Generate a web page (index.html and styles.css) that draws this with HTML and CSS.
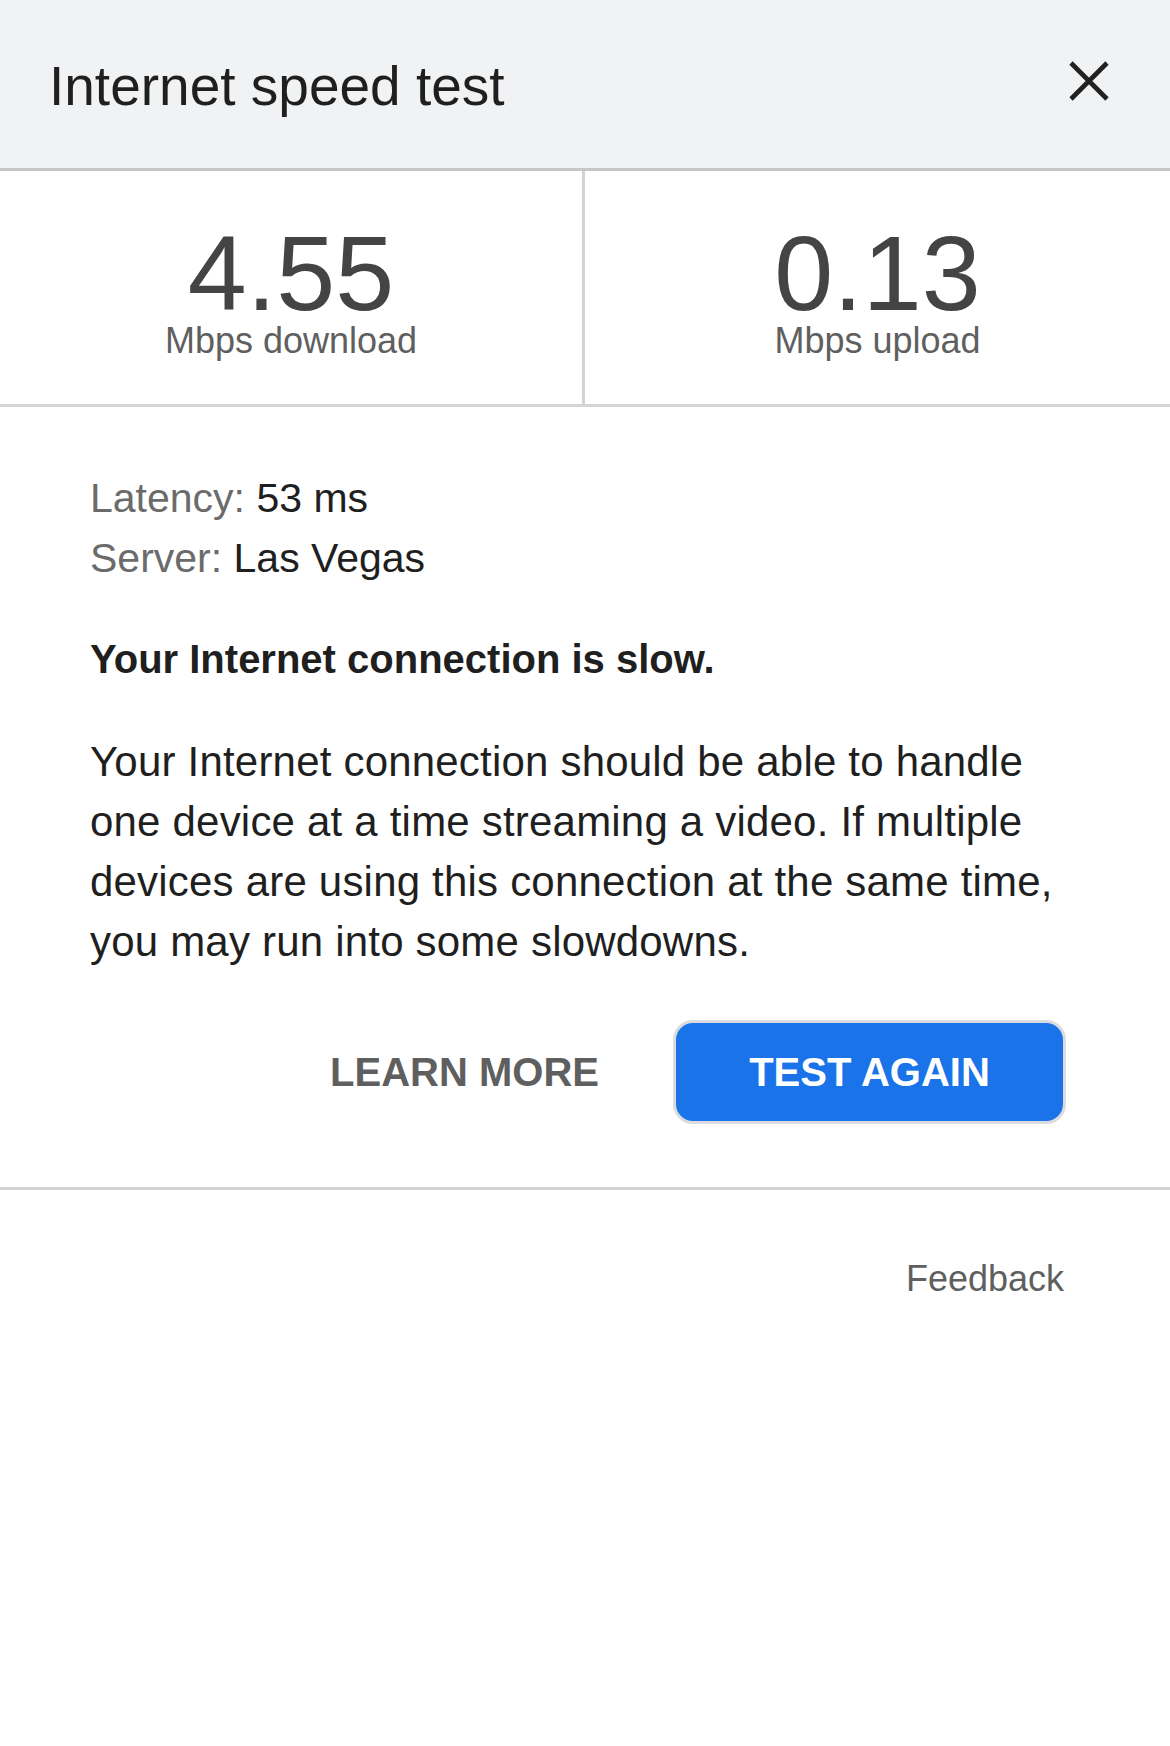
FILE: index.html
```html
<!DOCTYPE html>
<html lang="en">
<head>
<meta charset="utf-8">
<title>Internet speed test</title>
<link rel="stylesheet" href="styles.css">
</head>
<body>
<div class="page">
  <header class="header">
    <h1 class="title">Internet speed test</h1>
    <button class="close" aria-label="Close">
      <svg width="42" height="42" viewBox="0 0 42 42"><path d="M3 3 L39 39 M39 3 L3 39" stroke="#212121" stroke-width="4.6" fill="none"/></svg>
    </button>
  </header>
  <section class="stats">
    <div class="stat stat-left">
      <div class="value">4.55</div>
      <div class="unit">Mbps download</div>
    </div>
    <div class="stat">
      <div class="value">0.13</div>
      <div class="unit">Mbps upload</div>
    </div>
  </section>
  <section class="details">
    <div class="meta"><span class="label">Latency:</span> <span class="val">53 ms</span></div>
    <div class="meta"><span class="label">Server:</span> <span class="val">Las Vegas</span></div>
    <h2 class="verdict">Your Internet connection is slow.</h2>
    <p class="desc">Your Internet connection should be able to handle one device at a time streaming a video. If multiple devices are using this connection at the same time, you may run into some slowdowns.</p>
    <div class="actions">
      <button class="btn-text">LEARN MORE</button>
      <button class="btn-primary">TEST AGAIN</button>
    </div>
  </section>
  <footer class="footer">
    <a class="feedback">Feedback</a>
  </footer>
</div>
</body>
</html>
```
FILE: styles.css
```css
* { box-sizing: border-box; }
html, body { margin: 0; padding: 0; background: #fff; }
body {
  font-family: "Liberation Sans", Arial, Helvetica, sans-serif;
  color: #202124;
  width: 1170px;
}
.header {
  height: 171px;
  background: #f1f2f4;
  border-bottom: 3px solid #c6c6c8;
  display: flex;
  align-items: flex-start;
  justify-content: space-between;
  padding: 55px 60px 0 49px;
}
.title {
  margin: 0;
  font-size: 55px;
  line-height: 62px;
  font-weight: 400;
  color: #1f1f1f;
}
.close {
  margin-top: 5px;
  padding: 0;
  border: 0;
  background: none;
  width: 42px;
  height: 42px;
  display: block;
}
.close svg { display: block; }
.stats {
  display: grid;
  grid-template-columns: 585px 1fr;
  height: 236px;
  border-bottom: 3px solid #d5d5d5;
}
.stat {
  display: flex;
  flex-direction: column;
  align-items: center;
  padding-top: 52px;
}
.stat-left { border-right: 3px solid #d2d2d2; }
.value {
  font-size: 106px;
  line-height: 100px;
  color: #444;
}
.unit {
  font-size: 36px;
  line-height: 36px;
  color: #5f5f5f;
}
.details {
  padding: 61px 104px 63px 90px;
  border-bottom: 3px solid #d3d3d3;
}
.meta {
  font-size: 41px;
  line-height: 60px;
}
.label { color: #6b6b6b; }
.val { color: #1f1f1f; }
.verdict {
  margin: 41px 0 0;
  font-size: 40px;
  line-height: 60px;
  font-weight: 700;
  color: #1f1f1f;
}
.desc {
  margin: 43px 0 0;
  font-size: 42px;
  line-height: 60px;
  color: #1f1f1f;
  letter-spacing: 0.2px;
}
.actions {
  margin-top: 48px;
  display: flex;
  justify-content: flex-end;
  align-items: center;
  gap: 74px;
}
.btn-text {
  border: 0;
  background: none;
  padding: 0;
  font-family: inherit;
  font-size: 40px;
  font-weight: 700;
  color: #5f5f5f;
}
.btn-primary {
  width: 393px;
  height: 104px;
  border: 3px solid #dadce0;
  border-radius: 20px;
  background: #1a73e8;
  color: #fff;
  font-family: inherit;
  font-size: 40px;
  font-weight: 700;
  padding: 0;
}
.footer {
  display: flex;
  justify-content: flex-end;
  padding: 69px 106px 0 90px;
}
.feedback {
  font-size: 36px;
  line-height: 40px;
  color: #5f5f5f;
}
```
